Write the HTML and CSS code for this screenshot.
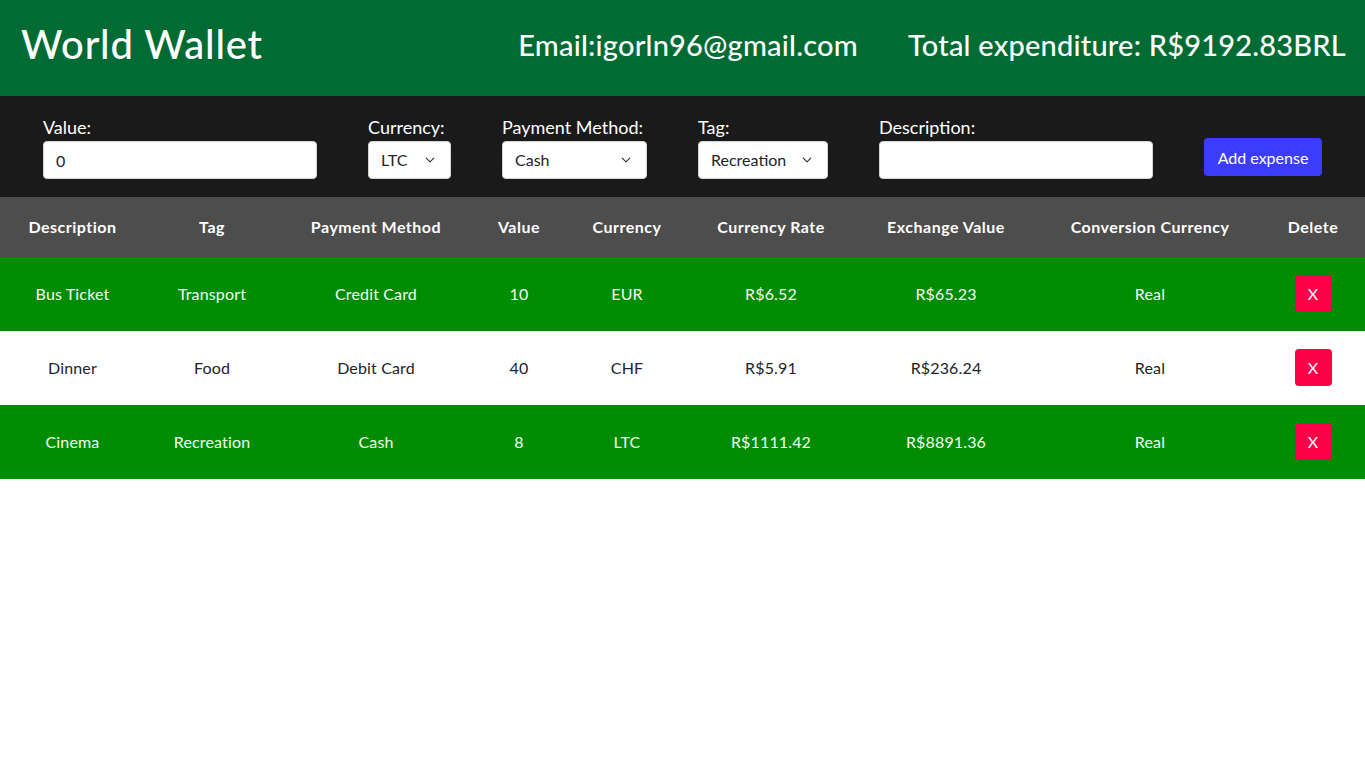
FILE: index.html
```html
<!DOCTYPE html>
<html lang="en">
<head>
<meta charset="utf-8">
<title>World Wallet</title>
<link rel="stylesheet" href="styles.css">
</head>
<body>
<header class="topbar">
  <h1 class="brand">World Wallet</h1>
  <div class="info">
    <span class="email">Email:igorln96@gmail.com</span>
    <span class="total">Total expenditure: R$9192.83BRL</span>
  </div>
</header>
<form class="expense-form">
  <label class="field">
    <span class="label">Value:</span>
    <input class="control w-value" type="text" value="0">
  </label>
  <label class="field">
    <span class="label">Currency:</span>
    <span class="select w-currency">LTC</span>
  </label>
  <label class="field">
    <span class="label">Payment Method:</span>
    <span class="select w-method">Cash</span>
  </label>
  <label class="field">
    <span class="label">Tag:</span>
    <span class="select w-tag">Recreation</span>
  </label>
  <label class="field">
    <span class="label">Description:</span>
    <input class="control w-desc" type="text" value="">
  </label>
  <button class="add-btn" type="button">Add expense</button>
</form>
<table class="expenses">
  <colgroup>
    <col class="c1"><col class="c2"><col class="c3"><col class="c4"><col class="c5"><col class="c6"><col class="c7"><col class="c8"><col class="c9">
  </colgroup>
  <thead>
    <tr>
      <th>Description</th><th>Tag</th><th>Payment Method</th><th>Value</th><th>Currency</th><th>Currency Rate</th><th>Exchange Value</th><th>Conversion Currency</th><th>Delete</th>
    </tr>
  </thead>
  <tbody>
    <tr class="odd">
      <td>Bus Ticket</td><td>Transport</td><td>Credit Card</td><td>10</td><td>EUR</td><td>R$6.52</td><td>R$65.23</td><td>Real</td><td><button class="del-btn" type="button">X</button></td>
    </tr>
    <tr class="even">
      <td>Dinner</td><td>Food</td><td>Debit Card</td><td>40</td><td>CHF</td><td>R$5.91</td><td>R$236.24</td><td>Real</td><td><button class="del-btn" type="button">X</button></td>
    </tr>
    <tr class="odd">
      <td>Cinema</td><td>Recreation</td><td>Cash</td><td>8</td><td>LTC</td><td>R$1111.42</td><td>R$8891.36</td><td>Real</td><td><button class="del-btn" type="button">X</button></td>
    </tr>
  </tbody>
</table>
</body>
</html>
```
FILE: styles.css
```css
* { box-sizing: border-box; }
body {
  margin: 0;
  font-family: "Lato", "Liberation Sans", sans-serif;
  color: #212529;
  background: #fff;
}
.topbar {
  height: 96px;
  background: #006b33;
  color: #fff;
  display: flex;
  align-items: center;
  justify-content: space-between;
  padding: 0 19px 8px 21px;
}
.brand {
  margin: 0;
  font-size: 40px;
  font-weight: 500;
  letter-spacing: 0.8px;
}
.info {
  display: flex;
  gap: 50px;
  font-size: 29px;
  font-weight: 500;
  letter-spacing: 0.2px;
}
.expense-form {
  margin: 0;
  height: 101px;
  background: #1a1a1a;
  display: flex;
  align-items: flex-end;
  gap: 51px;
  padding: 0 43px 18px 43px;
}
.field {
  display: flex;
  flex-direction: column;
  gap: 2px;
}
.label {
  color: #fff;
  font-size: 18px;
  line-height: 24px;
}
.control, .select {
  height: 38px;
  border: 1px solid #ced4da;
  border-radius: 4px;
  background: #fff;
  font-family: inherit;
  font-size: 16px;
  color: #212529;
  padding: 6px 12px;
  line-height: 24px;
  display: block;
}
.select {
  background-image: url("data:image/svg+xml,%3csvg xmlns='http://www.w3.org/2000/svg' viewBox='0 0 16 16'%3e%3cpath fill='none' stroke='%23343a40' stroke-linecap='round' stroke-linejoin='round' stroke-width='2' d='M2 5l6 6 6-6'/%3e%3c/svg%3e");
  background-repeat: no-repeat;
  background-position: right 14px center;
  background-size: 12px 10px;
}
.w-value { width: 274px; }
.w-currency { width: 83px; }
.w-method { width: 145px; }
.w-tag { width: 130px; }
.w-desc { width: 274px; }
.add-btn {
  height: 38px;
  width: 120px;
  margin-bottom: 3px;
  border: none;
  border-radius: 4px;
  background: #3c3cff;
  color: #fff;
  font-family: inherit;
  font-size: 16px;
  padding: 0;
}
.expenses {
  width: 100%;
  border-collapse: collapse;
  table-layout: fixed;
  text-align: center;
  font-size: 16px;
  letter-spacing: 0.15px;
}
.c1 { width: 145px; }
.c2 { width: 134px; }
.c3 { width: 194px; }
.c4 { width: 92px; }
.c5 { width: 124px; }
.c6 { width: 164px; }
.c7 { width: 186px; }
.c8 { width: 222px; }
.c9 { width: 104px; }
.expenses thead tr {
  background: #4d4d4d;
  color: #fff;
  height: 60px;
}
.expenses th {
  font-weight: 700;
  padding: 0 0 2px 0;
  letter-spacing: 0.5px;
}
.expenses td { padding: 0 0 2px 0; }
.expenses tbody tr { height: 74px; }
.expenses tr.odd { background: #008c00; color: #f2fff2; }
.expenses tr.even { background: #fff; color: #212529; }
.del-btn {
  width: 37px;
  height: 37px;
  border: none;
  border-radius: 4px;
  background: #ff0048;
  color: #fff;
  font-family: inherit;
  font-size: 16px;
  padding: 0;
}
```
